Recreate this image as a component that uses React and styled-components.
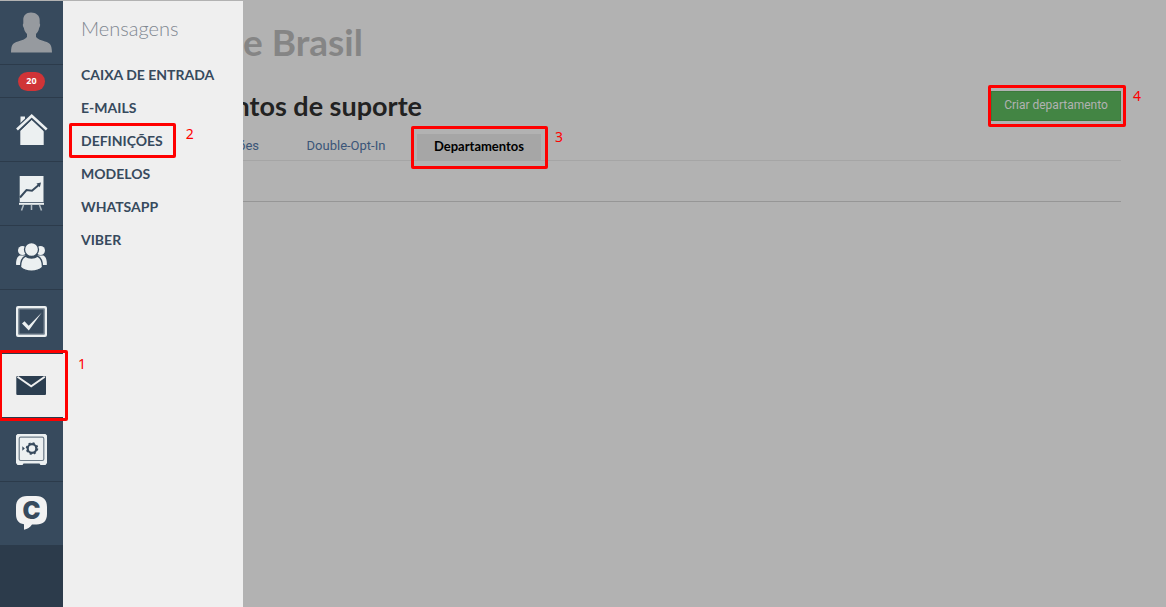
import React from "react";
import styled, { createGlobalStyle, css } from "styled-components";

const GlobalStyle = createGlobalStyle`
  * { box-sizing: border-box; }
  body {
    margin: 0;
    background: #b2b2b2;
    font-family: Lato, "Liberation Sans", sans-serif;
  }
  h1, h2, ul { margin: 0; padding: 0; }
  ul { list-style: none; }
  a { color: inherit; text-decoration: none; }
`;

const Page = styled.div`
  display: flex;
  min-height: 100vh;
  padding-top: 1px;
  overflow: hidden;
`;

const Sidebar = styled.nav`
  flex: none;
  width: 63px;
  background: #2c3b4b;
`;

const SideItem = styled.a`
  position: relative;
  display: flex;
  align-items: center;
  justify-content: center;
  height: ${(p) => (p.$short ? 33 : 64)}px;
  background: ${(p) => (p.$active ? "#efefef" : "#374a5d")};
  border-bottom: 1px solid #2c3b4b;
  svg { display: block; width: 63px; height: 63px; }
`;

const Badge = styled.span`
  width: 27px;
  height: 19px;
  border-radius: 10px;
  background: #d03437;
  color: #fff;
  font: bold 9px/17px "Open Sans", sans-serif;
  text-align: center;
`;

const Flyout = styled.aside`
  flex: none;
  width: 180px;
  padding: 14px 18px;
  background: #efefef;
`;

const FlyoutTitle = styled.h2`
  margin-bottom: 16px;
  color: #7f8791;
  font-size: 20px;
  font-weight: 300;
  line-height: 27px;
`;

const MenuItem = styled.li`
  height: 33px;
  color: #374a5d;
  font-size: 14px;
  font-weight: 700;
  line-height: 33px;
  white-space: nowrap;
`;

const Marked = styled.span`
  position: relative;
  display: inline-block;
`;

const markPlaces = {
  side: css`inset: -4px -5px -4px -1px;`,
  menu: css`inset: -1px -13px -1px -12px;`,
  tab: css`inset: -8px -7px -9px -6px;`,
  button: css`inset: -6px -5px -6px -3px;`,
};

const Mark = styled.span`
  position: absolute;
  z-index: 2;
  ${(p) => markPlaces[p.$place]}
  border: 3px solid #f00;
  border-radius: 2px;
  pointer-events: none;
`;

const Step = styled.span`
  position: absolute;
  top: ${(p) => (p.$low ? 2 : -1)}px;
  left: 100%;
  margin-left: ${(p) => (p.$near ? 10 : 13)}px;
  color: #f00;
  font: 400 14px/18px "Noto Sans", sans-serif;
`;

const Main = styled.main`
  flex: 1;
  min-width: 0;
  padding: 19px 45px 0 0;
  overflow: hidden;
`;

const AccountName = styled.h1`
  color: #858585;
  font-size: 37px;
  font-weight: 700;
  line-height: 44px;
`;

const HeadingRow = styled.div`
  display: flex;
  justify-content: space-between;
  align-items: center;
  height: 30px;
  margin-top: 27px;
`;

const Heading = styled.h2`
  display: flex;
  justify-content: flex-end;
  width: 179px;
  color: #222;
  font-size: 27px;
  font-weight: 700;
  line-height: 30px;
  white-space: nowrap;
`;

const CreateButton = styled.button`
  width: 130px;
  height: 30px;
  padding: 0 0 2px;
  border: 1px solid #3c7a3c;
  background: #438544;
  color: #b2b2b2;
  font: 400 12px/18px Roboto, sans-serif;
  white-space: nowrap;
`;

const Tabs = styled.div`
  display: flex;
  gap: 14px;
  height: 27px;
  margin-top: 13px;
  border-bottom: 1px solid #a5a5a5;
`;

const Tab = styled.a`
  position: relative;
  display: flex;
  justify-content: ${(p) => (p.$clipped ? "flex-end" : "center")};
  width: ${(p) => (p.$clipped ? 32 : p.$active ? 124 : 114)}px;
  padding: 0 ${(p) => (p.$clipped ? 16 : 0)}px 0 0;
  background: ${(p) => (p.$active ? "#a6a6a6" : "transparent")};
  color: ${(p) => (p.$active ? "#000" : "#3b5578")};
  font-family: ${(p) => (p.$active ? "Lato" : "Roboto")}, sans-serif;
  font-size: 13px;
  font-weight: ${(p) => (p.$active ? 700 : 400)};
  line-height: 24px;
`;

const Divider = styled.hr`
  margin: 40px 0 0;
  border: 0;
  border-top: 1px solid #969696;
`;

const light = "#ecf0f1";
const dark = "#374a5d";

const Icon = ({ children }) => (
  <svg viewBox="0 0 63 63" aria-hidden="true">{children}</svg>
);

const Avatar = () => (
  <Icon>
    <path fill="#969a9f" d="M31 11.500c5 0 9 3 8.700 8v3c.8.700.5 3-.6 4.500-.4 3-1.600 4.500-3.100 6v3c2 2.600 5 3 9 4.500 5 1.600 6.700 2.500 7 11H11c.2-8.500 2-9.500 7-11 4-1.500 7-2 9-4.500v-3c-1.500-1.500-2.700-3-3.100-6-1.100-1.500-1.400-3.800-.6-4.500v-3c-.3-5 2.700-8 7.700-8z" />
  </Icon>
);

const House = () => (
  <Icon>
    <path fill={light} d="M20.500 18.500h4.500v4l-4.500 4zM31.700 21.700l12 11V47H20.300V32.700z" />
    <path d="M16.700 32.200L31.700 18l15 14.200" fill="none" stroke={dark} strokeWidth="5.500" />
    <path d="M17 31.500L31.700 17.800l15 13.700" fill="none" stroke={light} strokeWidth="2.600" />
  </Icon>
);

const Chart = () => (
  <Icon>
    <path fill={light} d="M19.700 14h23.800v26H19.700z" />
    <path d="M20 35.500l6.500-7.500 5.500.8 7-6" fill="none" stroke={dark} strokeWidth="2" />
    <path fill={dark} d="M36.500 21.500l4.500-1-1.200 4.800z" />
    <path d="M19 41.800h25" stroke={light} strokeWidth="2" />
    <path d="M23.500 43l-2 5.500M31.500 43v5M39.500 43l2 5.500" stroke="#b0bac1" strokeWidth="1.500" />
  </Icon>
);

const People = () => (
  <Icon>
    <g fill={light}>
      <circle cx="22.500" cy="24.500" r="4.500" />
      <circle cx="40.500" cy="24.500" r="4.500" />
      <path d="M19.500 29.500h6v9.500h-9.300c-.4-4 .6-8 3.300-9.500zM43.500 29.500h-6v9.500h9.300c.4-4-.6-8-3.300-9.500z" />
    </g>
    <g fill={light} stroke={dark} strokeWidth="1.300">
      <path d="M25.500 30.200c3.500 2.500 8.500 2.500 12 0 3.500 1.500 5 6 5 11-5.500 5.200-16.500 5.200-22 0 0-5 1.500-9.500 5-11z" />
      <circle cx="31.500" cy="23.500" r="7" />
    </g>
  </Icon>
);

const Check = () => (
  <Icon>
    <rect x="17.200" y="17.200" width="28.600" height="28.600" rx=".8" fill="none" stroke={light} strokeWidth="2.400" />
    <rect x="19" y="19" width="25" height="25" rx="1" fill="none" stroke="#8d99a4" strokeWidth=".8" />
    <path fill={light} d="M22 33.500l2.500-2.300 4.200 4.600L41.800 22.500 28.800 40.500z" />
  </Icon>
);

const Mail = () => (
  <Icon>
    <rect x="16.300" y="22" width="29.700" height="19" rx="1" fill="#2c3e50" />
    <path d="M17.500 22.800L31.200 32.200 44.800 22.800" fill="none" stroke="#efefef" strokeWidth="2" />
  </Icon>
);

const Safe = () => (
  <Icon>
    <path fill={light} d="M17.500 16h28l1.500 1.500V45l-1.500 2h-5l-1-1.500h-16l-1 1.500h-5L16 45V17.500z" />
    <rect x="19.200" y="19.200" width="24.600" height="23.300" rx="1.500" fill="none" stroke="#6d7c89" strokeWidth="1.200" />
    <circle cx="32" cy="30.500" r="4.300" fill="none" stroke={dark} strokeWidth="2.200" />
    <circle cx="32" cy="30.500" r="5.500" fill="none" stroke={dark} strokeWidth="1.500" strokeDasharray="2.160 2.160" />
    <path fill={dark} d="M22.300 28.300l2.500 2.200-2.500 2.200z" />
  </Icon>
);

const Chat = () => (
  <Icon>
    <path fill="#f2f2f2" d="M27 14h9c7.500 0 11 4 11 11v7c0 7-4 10.500-10.500 10.500h-4.500c-2 3-4.500 4.500-8 5.300v-5.600C18.500 41.500 16 38 16 32v-7c0-7 4-11 11-11z" />
    <text x="31.500" y="37" textAnchor="middle" fill={dark} fontFamily="Inter, sans-serif" fontWeight="900" fontSize="24">C</text>
  </Icon>
);

const menu = ["CAIXA DE ENTRADA", "E-MAILS", "DEFINIÇÕES", "MODELOS", "WHATSAPP", "VIBER"];

export default function App() {
  return (
    <>
      <GlobalStyle />
      <Page>
        <Sidebar>
          <SideItem href="#perfil" aria-label="Perfil"><Avatar /></SideItem>
          <SideItem href="#avisos" $short><Badge>20</Badge></SideItem>
          <SideItem href="#inicio" aria-label="Início"><House /></SideItem>
          <SideItem href="#relatorios" aria-label="Relatórios"><Chart /></SideItem>
          <SideItem href="#contatos" aria-label="Contatos"><People /></SideItem>
          <SideItem href="#formularios" aria-label="Formulários"><Check /></SideItem>
          <SideItem href="#mensagens" aria-label="Mensagens" $active>
            <Mail />
            <Mark $place="side"><Step $low>1</Step></Mark>
          </SideItem>
          <SideItem href="#cofre" aria-label="Cofre"><Safe /></SideItem>
          <SideItem href="#chat" aria-label="Chat"><Chat /></SideItem>
        </Sidebar>
        <Flyout>
          <FlyoutTitle>Mensagens</FlyoutTitle>
          <ul>
            {menu.map((label) => (
              <MenuItem key={label}>
                {label === "DEFINIÇÕES" ? (
                  <Marked>
                    <a href="#definicoes">{label}</a>
                    <Mark $place="menu"><Step>2</Step></Mark>
                  </Marked>
                ) : (
                  <a href={"#" + label.toLowerCase()}>{label}</a>
                )}
              </MenuItem>
            ))}
          </ul>
        </Flyout>
        <Main>
          <AccountName>e Brasil</AccountName>
          <HeadingRow>
            <Heading>ntos de suporte</Heading>
            <Marked>
              <CreateButton type="button">Criar departamento</CreateButton>
              <Mark $place="button"><Step $near>4</Step></Mark>
            </Marked>
          </HeadingRow>
          <Tabs>
            <Tab href="#definicoes-gerais" $clipped>ões</Tab>
            <Tab href="#double-opt-in">Double-Opt-In</Tab>
            <Tab href="#departamentos" $active>
              Departamentos
              <Mark $place="tab"><Step $near>3</Step></Mark>
            </Tab>
          </Tabs>
          <Divider />
        </Main>
      </Page>
    </>
  );
}
